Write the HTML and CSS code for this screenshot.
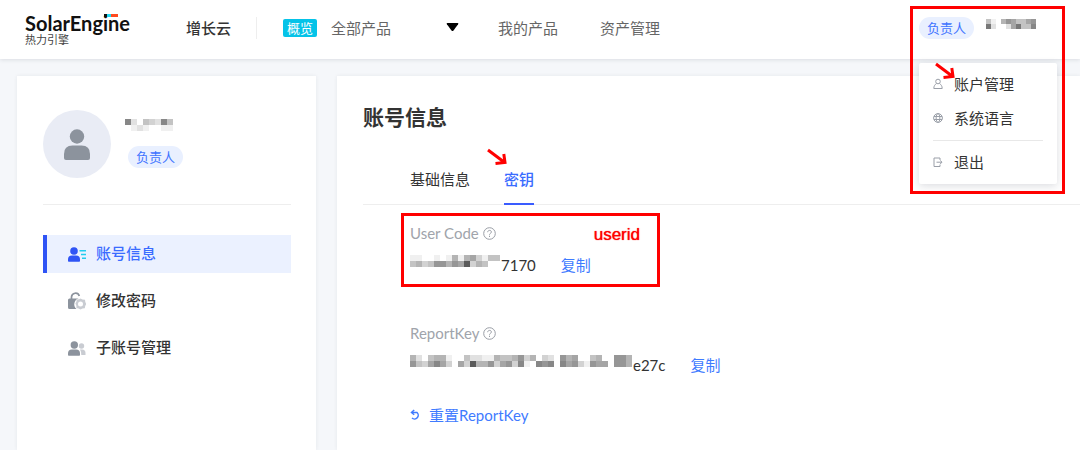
FILE: index.html
```html
<!DOCTYPE html>
<html lang="zh-CN">
<head>
<meta charset="utf-8">
<title>账号信息 - SolarEngine</title>
<link rel="stylesheet" href="styles.css">
</head>
<body>
<header class="topbar">
  <a class="brand" href="#">
    <span class="brand-name">SolarEngine<svg class="brand-accent" width="14" height="3" viewBox="0 0 14 3"><path fill="#111" d="M0 0h3v3H0z"/><path fill="#1fd9f2" d="M3 0h4v3H3z"/><path fill="#ff4a1f" d="M7 0h7v3H7z"/></svg></span>
    <span class="brand-sub">热力引擎</span>
  </a>
  <a class="suite" href="#">增长云</a>
  <nav class="nav">
    <span class="overview">概览</span>
    <div class="picker">
      <select aria-label="产品"><option>全部产品</option></select>
      <svg width="13" height="9" viewBox="0 0 13 9"><path d="M1.500 0h10q1.500 0 .6 1.300L7.500 7.500q-1 1.200-2 0L.9 1.300Q0 0 1.500 0z"/></svg>
    </div>
    <a class="nav-link" href="#">我的产品</a>
    <a class="nav-link" href="#">资产管理</a>
  </nav>
  <div class="user">
    <span class="role">负责人</span>
    <svg class="mosaic" data-cells="4105764467 9200269448" data-size="5"></svg>
    <div class="menu">
      <button class="menu-item" type="button">
        <svg width="10" height="12" viewBox="0 0 10 12"><circle cx="5" cy="3.500" r="2.300"/><path d="M3.500 5.500C2 6.500.8 8 .8 10.500h8.400C9.200 8 8 6.500 6.500 5.500"/></svg>账户管理
      </button>
      <button class="menu-item" type="button">
        <svg width="10" height="12" viewBox="0 0 10 12"><circle cx="5" cy="6" r="4.400"/><ellipse cx="5" cy="6" rx="1.900" ry="4.400"/><path d="M1 4.500h8M1 7.500h8"/></svg>系统语言
      </button>
      <button class="menu-item menu-exit" type="button">
        <svg width="10" height="12" viewBox="0 0 10 12"><path d="M7 4V2H1v8.500h6V8.500M3.500 6.200H9M7.200 4.500L9 6.200 7.200 8"/></svg>退出
      </button>
    </div>
    <div class="mark mark-user"></div>
    <svg class="arrow arrow-menu" width="20" height="18" viewBox="0 0 20 18"><path d="M1 2l16 12M8.500 15.500L18 14.500 16.800 6"/></svg>
  </div>
</header>

<div class="layout">
  <aside class="panel sidebar">
    <div class="profile">
      <div class="avatar">
        <svg width="26" height="31" viewBox="0 0 26 31"><circle cx="13" cy="7.500" r="7.200"/><path d="M0 29v-4q0-8.500 8.500-8.500h9q8.500 0 8.500 8.500v4q0 2-2 2H2q-2 0-2-2z"/></svg>
      </div>
      <div class="profile-info">
        <svg class="mosaic" data-cells="82043284 01210011" data-size="6"></svg>
        <span class="role">负责人</span>
      </div>
    </div>
    <nav class="side-nav">
      <a class="side-link active" href="#">
        <svg width="18" height="17" viewBox="0 0 18 17"><g fill="#2f54f5"><circle cx="6" cy="5" r="3.800"/><path d="M0 15v-1.500Q0 9.500 4 9.500h4q4 0 4 4V15q0 .8-.8.8H.8Q0 15.800 0 15z"/></g><path d="M11.500 4.700H18M13 8.500h5M14 12.300h4" stroke="#20cdef" stroke-width="1.600"/></svg>账号信息
      </a>
      <a class="side-link" href="#">
        <svg width="18" height="18" viewBox="0 0 18 18"><path d="M3.500 7V5a4 4 0 0 1 7.800-1" fill="none" stroke="#8c939d" stroke-width="1.700"/><path fill="#8c939d" d="M1.500 6.500h9.300A6 6 0 0 0 8.500 17H1.500Q0 17 0 15.500V8q0-1.500 1.500-1.500z"/><path fill="#c9ccd2" fill-rule="evenodd" d="M12.500 6.500l2 1 2.500.2.300 2.300.9 2-1 2-.4 2.200-2.300.3-2 .9-2-1-2-.5-.2-2.300-.9-2 1-1.900.3-2.200 2.300-.2zM12.500 9.500a2.500 2.500 0 1 0 0 5 2.500 2.500 0 0 0 0-5z"/></svg>修改密码
      </a>
      <a class="side-link" href="#">
        <svg width="18" height="17" viewBox="0 0 18 17"><g fill="#c9ccd2"><circle cx="13.500" cy="6" r="2.700"/><path d="M12 9.500h2q3.500 0 3.500 3.500v2h-4.200q0-3.500-1.300-5.500z"/></g><g fill="#8c939d"><circle cx="6.300" cy="5" r="3.700"/><path d="M0 15v-1.500Q0 9.500 4 9.500h4q4 0 4 4V15q0 .8-.8.8H.8Q0 15.800 0 15z"/></g></svg>子账号管理
      </a>
    </nav>
  </aside>

  <main class="panel content">
    <h1>账号信息</h1>
    <div class="tabs" role="tablist">
      <button class="tab" type="button" role="tab">基础信息</button>
      <button class="tab active" type="button" role="tab" aria-selected="true">密钥
        <svg class="arrow arrow-tab" width="20" height="18" viewBox="0 0 20 18"><path d="M1 2l16 12M8.500 15.500L18 14.500 16.800 6"/></svg>
      </button>
    </div>
    <div class="fields">
      <section class="field">
        <h2>User Code <svg class="help" width="13" height="13" viewBox="0 0 13 13"><circle cx="6.500" cy="6.500" r="5.800"/><path d="M4.700 5.200c0-2.500 3.700-2.300 3.700-.2 0 1.300-1.900 1.400-1.900 2.700M6.500 8.700v1.300"/></svg></h2>
        <div class="value">
          <svg class="mosaic" data-cells="110010151563144 453477576b35400" data-size="6"></svg><span>7170</span>
          <button class="link" type="button">复制</button>
        </div>
        <div class="mark mark-code"><span>userid</span></div>
      </section>
      <section class="field">
        <h2>ReportKey <svg class="help" width="13" height="13" viewBox="0 0 13 13"><circle cx="6.500" cy="6.500" r="5.800"/><path d="M4.700 5.200c0-2.500 3.700-2.300 3.700-.2 0 1.300-1.900 1.400-1.900 2.700M6.500 8.700v1.300"/></svg></h2>
        <div class="value">
          <svg class="mosaic" data-cells="5204551004221154457350320756004500775 7436863063b55736738108780867317660775" data-size="6"></svg><span>e27c</span>
          <button class="link" type="button">复制</button>
        </div>
      </section>
      <button class="link reset" type="button"><svg width="12" height="12" viewBox="0 0 12 12"><path d="M2 3.500h5a3.700 3.700 0 1 1-5 5.500"/><path d="M4.200 1L1.500 3.500l2.700 2.300"/></svg>重置ReportKey</button>
    </div>
  </main>
</div>
<script src="mosaic.js"></script>
</body>
</html>
```
FILE: styles.css
```css
* { box-sizing: border-box; }
body {
  margin: 0;
  min-height: 100vh;
  display: flex;
  flex-direction: column;
  background: #f5f7fa;
  color: #333;
  font: 15px/22px Lato, "Noto Sans CJK SC", sans-serif;
  overflow-x: hidden;
}
a { color: inherit; text-decoration: none; }
button { border: 0; padding: 0; background: none; color: inherit; font: inherit; cursor: pointer; }
svg { display: block; flex: none; }

.topbar {
  position: relative;
  z-index: 2;
  display: flex;
  align-items: center;
  height: 59px;
  padding: 0 44px 4px 25px;
  background: #fff;
  box-shadow: 0 1px 4px rgba(30, 40, 60, .12);
}
.brand { width: 161px; display: flex; flex-direction: column; color: #111; padding-top: 4px; }
.brand-name { position: relative; align-self: flex-start; font-size: 20px; line-height: 20px; font-weight: 700; }
.brand-accent { position: absolute; right: 12px; top: 1px; }
.brand-sub { font-size: 11px; line-height: 14px; color: #444; }
.suite { padding-right: 25px; border-right: 1px solid #eee; font-weight: 500; color: #333; }
.nav { display: flex; align-items: center; padding-left: 26px; color: #666; }
.overview { padding: 0 4px; border-radius: 2px; background: #05c3e8; color: #fff; font-size: 13px; line-height: 18px; }
.picker { display: grid; align-items: center; width: 128px; margin: 0 39px 0 14px; }
.picker > * { grid-area: 1 / 1; }
.picker select { appearance: none; width: 100%; border: 0; padding: 0; background: none; color: #666; font: inherit; }
.picker svg { justify-self: end; pointer-events: none; }
.nav-link { margin-right: 42px; }

.role { padding: 0 8px; border-radius: 11px; background: #e9f0ff; color: #3f73ff; font-size: 13px; line-height: 22px; }
.user { position: relative; display: flex; gap: 12px; align-items: center; margin-left: auto; }
.user > .mosaic { margin: 0 0 8px; }
.menu {
  position: absolute;
  top: 46px;
  left: 0;
  width: 138px;
  padding: 4px 14px 0;
  background: #fff;
  border-radius: 2px;
  box-shadow: 0 2px 8px rgba(30, 40, 60, .16);
}
.menu-item { display: flex; align-items: center; gap: 11px; width: 100%; height: 34px; }
.menu-item svg { fill: none; stroke: #9a9fa8; stroke-width: 1; }
.menu-exit { height: 44px; margin-top: 5px; border-top: 1px solid #e8e8e8; }

.mark { position: absolute; border: 3px solid #f00; pointer-events: none; }
.mark-user { left: -9px; top: -11px; width: 155px; height: 188px; }
.mark-code { left: -9px; top: -10px; width: 259px; height: 74px; }
.mark-code span {
  position: absolute;
  right: 17px;
  top: 8px;
  color: #f00;
  font: 17px/22px "Liberation Sans", sans-serif;
  text-shadow: 0 0 1px #f00;
}
.arrow { position: absolute; fill: none; stroke: #f00; stroke-width: 3; }
.arrow-menu { left: 16px; top: 45px; }
.arrow-tab { left: -17px; top: -12px; }

.layout { flex: 1; display: flex; gap: 21px; padding: 17px 0 0 17px; }
.panel { background: #fff; box-shadow: 0 0 4px rgba(30, 40, 60, .07); }
.sidebar { width: 299px; flex: none; padding: 34px 25px 0 26px; }
.profile { display: flex; gap: 14px; padding-bottom: 26px; border-bottom: 1px solid #eee; }
.avatar { width: 68px; height: 68px; border-radius: 50%; background: #e9ecf5; display: grid; place-items: center; }
.avatar svg { fill: #8c939d; }
.profile-info { display: flex; flex-direction: column; align-items: flex-start; gap: 15px; padding-top: 9px; }
.profile-info .role { margin-left: 3px; }
.side-nav { display: flex; flex-direction: column; gap: 9px; padding-top: 30px; }
.side-link { display: flex; align-items: center; gap: 10px; height: 38px; padding-left: 21px; padding-bottom: 2px; border-left: 4px solid transparent; font-weight: 500; }
.side-link svg { margin-top: 2px; }
.side-link.active { border-color: #2f54f5; background: #ebf1ff; color: #3a6cff; }

.content { flex: 1; padding: 25px 0 0 26px; }
h1 { margin: 0; font-size: 21px; line-height: 32px; font-weight: 700; }
.tabs { display: flex; gap: 34px; margin-top: 27px; padding-left: 47px; border-bottom: 1px solid #eee; }
.tab { position: relative; height: 45px; padding-bottom: 6px; margin-bottom: -1px; border-bottom: 2px solid transparent; }
.tab.active { border-color: #3a5cff; color: #3a6cff; font-weight: 500; }
.fields { padding: 18px 0 0 47px; }
.field { position: relative; height: 100px; }
h2 { display: flex; align-items: center; gap: 4px; margin: 0; font-size: 15px; line-height: 20px; font-weight: 400; color: #a0a4ab; }
.help { fill: none; stroke: #999da5; stroke-width: 1; }
.value { display: flex; align-items: center; height: 22px; margin-top: 11px; }
.value .mosaic { margin-bottom: 8px; }
.value span { padding-left: 1px; }
.link { color: #3f7bff; }
.value .link { margin-left: 25px; }
.reset { display: flex; align-items: center; gap: 7px; margin-top: -19px; }
.reset svg { fill: none; stroke: #3f7bff; stroke-width: 1.5; }
```
FILE: mosaic.js
```js
// Draws masked values as grey blocks; each hex digit is a shade, 0 is empty.
document.querySelectorAll('.mosaic').forEach(svg => {
  const size = Number(svg.dataset.size);
  const rows = svg.dataset.cells.split(' ');
  const columns = Math.max(...rows.map(row => row.length));
  svg.setAttribute('width', columns * size);
  svg.setAttribute('height', rows.length * size);
  rows.forEach((row, y) => [...row].forEach((digit, x) => {
    const cell = document.createElementNS('http://www.w3.org/2000/svg', 'rect');
    const shade = 255 - parseInt(digit, 16) * 15;
    cell.setAttribute('x', x * size);
    cell.setAttribute('y', y * size);
    cell.setAttribute('width', size);
    cell.setAttribute('height', size);
    cell.setAttribute('fill', `rgb(${shade},${shade},${shade})`);
    svg.append(cell);
  }));
});
```
